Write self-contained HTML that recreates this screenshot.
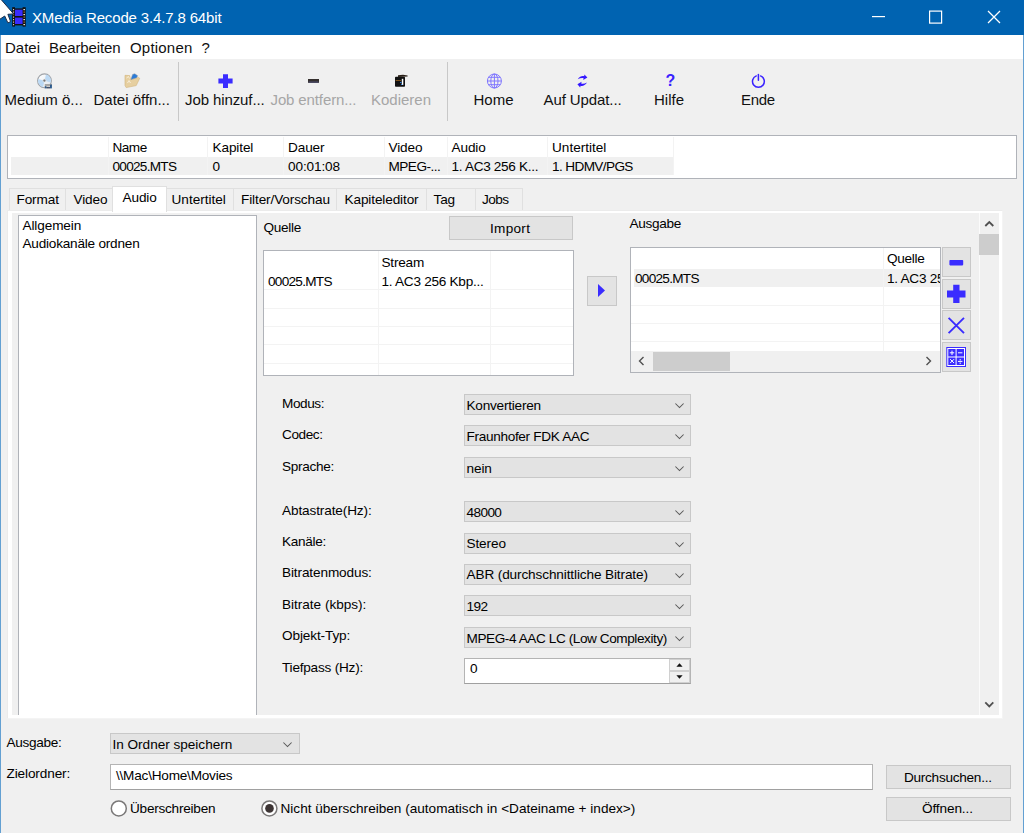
<!DOCTYPE html>
<html lang="de">
<head>
<meta charset="utf-8">
<title>XMedia Recode 3.4.7.8 64bit</title>
<style>
*{box-sizing:border-box;margin:0;padding:0}
html,body{width:1024px;height:833px;overflow:hidden;background:#f0f0f0}
body{position:relative;font-family:"Liberation Sans",sans-serif;color:#000}
.a{position:absolute}
.t{position:absolute;white-space:pre;font-size:13.6px;line-height:15px;color:#000;letter-spacing:-0.12px}
.s{position:absolute;white-space:pre;font-size:15px;line-height:17px;color:#101010}
.dis{color:#a6a6a6}
.btn{position:absolute;background:#e3e3e3;border:1px solid #c8c8c8}
.cb{position:absolute;background:#e3e3e3;border:1px solid #c8c8c8;height:21px}
.cb svg{position:absolute;right:6.3px;top:8px}
.lst{position:absolute;background:#fff;border:1px solid #b0b3b9}
.gl{position:absolute;background:#f3f3f3}
.tab{position:absolute;top:188px;height:23px;background:#f0f0f0;border:1px solid #e0e0e0;border-bottom:none}
</style>
</head>
<body>

<!-- title bar -->
<div class="a" id="titlebar" style="left:0;top:0;width:1024px;height:35px;background:#0063b1"></div>
<div class="s" style="left:32px;top:9.3px;color:#fff;letter-spacing:-0.15px">XMedia Recode 3.4.7.8 64bit</div>
<!-- app icon -->
<svg class="a" style="left:11px;top:6px" width="16" height="22" viewBox="11 6 16 22">
  <rect x="12.2" y="7.2" width="2.8" height="19.4" fill="#111"/>
  <rect x="22.6" y="7.2" width="3.1" height="19.4" fill="#111"/>
  <rect x="14" y="8.4" width="9.5" height="17" fill="#111"/>
  <rect x="15" y="9.7" width="7.6" height="6.3" fill="#3a2cff"/>
  <rect x="15" y="17.6" width="7.6" height="6.4" fill="#3a2cff"/>
  <g fill="#e8e0d8">
    <rect x="13.1" y="9" width="1" height="1.2"/><rect x="13.1" y="11.5" width="1" height="1.2"/>
    <rect x="13.1" y="16.5" width="1" height="1.2"/><rect x="13.1" y="19" width="1" height="1.2"/>
    <rect x="13.1" y="21.5" width="1" height="1.2"/><rect x="13.1" y="24" width="1" height="1.2"/>
    <rect x="23.4" y="9" width="1.6" height="1.2"/><rect x="23.4" y="14" width="1.6" height="1.2"/>
    <rect x="23.4" y="19" width="1.6" height="1.2"/><rect x="23.4" y="24" width="1.6" height="1.2"/>
  </g>
  <g fill="#9a6a30">
    <rect x="13.1" y="14" width="1" height="1.2"/>
    <rect x="23.4" y="11.5" width="1.6" height="1.2"/><rect x="23.4" y="16.5" width="1.6" height="1.2"/><rect x="23.4" y="21.5" width="1.6" height="1.2"/>
  </g>
</svg>
<!-- mouse cursor -->
<svg class="a" style="left:0;top:0" width="16" height="25" viewBox="0 0 16 25">
  <polygon points="-2,-3.6 1.2,-0.4 13.6,13.9 7.9,14.3 10.6,21.6 7.9,22.9 4.7,16 -1,19.8" fill="#fff" stroke="#1c2c48" stroke-width="1"/>
</svg>
<!-- window buttons -->
<svg class="a" style="left:860px;top:0" width="164" height="35" viewBox="860 0 164 35">
  <rect x="872" y="16" width="13" height="1.2" fill="#fff"/>
  <rect x="929.6" y="11.1" width="12" height="12" fill="none" stroke="#fff" stroke-width="1.2"/>
  <path d="M988 11 L1000 23 M1000 11 L988 23" stroke="#fff" stroke-width="1.25" fill="none"/>
</svg>

<!-- menu bar -->
<div class="a" style="left:1px;top:35px;width:1022px;height:23.5px;background:#fff"></div>
<div class="s" style="left:5px;top:39.2px">Datei</div>
<div class="s" style="left:49px;top:39.2px;letter-spacing:-0.1px">Bearbeiten</div>
<div class="s" style="left:130px;top:39.2px;letter-spacing:0.2px">Optionen</div>
<div class="s" style="left:201.5px;top:39.2px">?</div>

<!-- window borders -->
<div class="a" style="left:0;top:35px;width:1px;height:798px;background:#63a0d2"></div>
<div class="a" style="left:1023px;top:35px;width:1px;height:798px;background:#63a0d2"></div>

<!-- toolbar -->
<div class="a" style="left:178px;top:62px;width:1px;height:59px;background:#c8c8c8"></div>
<div class="a" style="left:447px;top:62px;width:1px;height:59px;background:#c8c8c8"></div>

<div class="s" style="left:4.5px;top:91.1px">Medium ö...</div>
<div class="s" style="left:93.5px;top:91.1px">Datei öffn...</div>
<div class="s" style="left:185px;top:91.1px;letter-spacing:-0.1px">Job hinzuf...</div>
<div class="s dis" style="left:270.5px;top:91.1px;letter-spacing:-0.12px">Job entfern...</div>
<div class="s dis" style="left:371px;top:91.1px">Kodieren</div>
<div class="s" style="left:473.5px;top:91.1px">Home</div>
<div class="s" style="left:543.5px;top:91.1px;letter-spacing:-0.1px">Auf Updat...</div>
<div class="s" style="left:654px;top:91.1px">Hilfe</div>
<div class="s" style="left:741px;top:91.1px;letter-spacing:-0.35px">Ende</div>

<!-- toolbar icons -->
<svg class="a" style="left:0;top:70px" width="800" height="22" viewBox="0 70 800 22">
  <defs>
    <linearGradient id="cd" x1="0" y1="0" x2="1" y2="1"><stop offset="0" stop-color="#ffffff"/><stop offset="1" stop-color="#dfe6ee"/></linearGradient>
  </defs>
  <!-- disc -->
  <circle cx="44.5" cy="80.8" r="6.9" fill="url(#cd)" stroke="#9fa3a8" stroke-width="1.1"/>
  <path d="M44.5 80.8 L46 74.5 A6.5 6.5 0 0 1 50.8 82.5 Z" fill="#bcd9f4"/>
  <path d="M44.5 80.8 L43 87 A6.5 6.5 0 0 1 38.2 79 Z" fill="#bcd9f4"/>
  <circle cx="44.4" cy="80.6" r="1.5" fill="#777" stroke="#e8e8e8" stroke-width="0.8"/>
  <rect x="44.8" y="84" width="7.2" height="2.4" fill="#a6a6a6"/>
  <rect x="46.4" y="86.2" width="3.8" height="1" fill="#d4d4d4"/>
  <rect x="44.8" y="86.2" width="1.6" height="2.2" fill="#2c5a8c"/>
  <rect x="50" y="84.6" width="1.9" height="3.8" fill="#2c5a8c"/>
  <rect x="46.4" y="87.1" width="3.6" height="1.3" fill="#34425e"/>
  <!-- folder -->
  <polygon points="125,75.3 129.7,75.6 130.6,79.7 138.5,77.4 139.7,78.3 136.2,85.6 126.2,87.6 125,85.6" fill="#e6cfa0" stroke="#d2b37a" stroke-width="0.6"/>
  <polygon points="131,79.3 132.6,74.4 134.8,73.8 137.6,75.7 136.6,77.7 131,79.6" fill="#2a7bd8" stroke="#8d949e" stroke-width="0.5"/>
  <path d="M126.5 78 l2 -1.5 l1 2 M127.5 83 l1.5 -2.5 l1.5 2.5" stroke="#f8efdc" stroke-width="0.9" fill="none"/>
  <!-- plus -->
  <path d="M223 74.2 h5 v4.2 h4.6 v5 h-4.6 v4.6 h-5 v-4.6 h-4.6 v-5 h4.6 z" fill="#3a2cff"/>
  <!-- minus (disabled look) -->
  <rect x="308" y="79" width="11" height="3.8" fill="#35302e"/>
  <rect x="308.6" y="81.4" width="9.8" height="1.4" fill="#4a4a66"/>
  <!-- kodieren -->
  <rect x="395" y="76.8" width="10" height="10" rx="0.8" fill="#111"/>
  <polygon points="398,75.2 403,74.8 407.6,75.4 407.6,76.4 398,77" fill="#2a2018"/>
  <rect x="401.8" y="78.8" width="1.5" height="6.2" fill="#fff"/>
  <rect x="395.6" y="80" width="5.4" height="0.9" fill="#8a5a20"/>
  <rect x="400" y="82" width="1.4" height="1" fill="#2a7bd8"/><rect x="401" y="84" width="1.2" height="1" fill="#2a7bd8"/>
  <!-- globe -->
  <g fill="none" stroke="#8077ff" stroke-width="1">
    <circle cx="494.4" cy="81" r="7"/>
    <ellipse cx="494.4" cy="81" rx="3.6" ry="7"/>
    <path d="M494.4 74 V88 M487.4 81 H501.4 M488.6 77.3 H500.2 M488.6 84.7 H500.2"/>
  </g>
  <!-- refresh -->
  <g fill="#3418ff" stroke="none">
    <path d="M577.8 79.2 C579.5 76.2 582.5 75.6 584.2 76.2 L584.4 74.4 L587.4 77.6 L583.2 79.9 L583.6 78.2 C581.8 77.8 579.8 78.2 577.8 79.2 Z"/>
    <path d="M587 82.6 C585.3 85.6 582.3 86.4 580.6 85.8 L580.2 87.6 L577.4 84.2 L581.6 81.8 L581.2 83.6 C583 84.2 585 83.6 587 82.6 Z"/>
  </g>
  <!-- power -->
  <g fill="none" stroke="#3a22ff" stroke-width="1.5" stroke-linecap="round">
    <path d="M756.3 75.9 A5.9 5.9 0 1 0 760.5 75.9"/>
    <path d="M758.4 74.4 V80.2"/>
  </g>
</svg>
<div class="a" style="left:663.5px;top:71.4px;width:14px;font-size:16px;line-height:19px;font-weight:bold;color:#3a22ff;text-align:center">?</div>

<!-- file list -->
<div class="lst" style="left:7px;top:135px;width:1010px;height:44px"></div>
<div class="a" style="left:10.6px;top:157px;width:663.4px;height:17.5px;background:#f0f0f0"></div>
<div class="gl" style="left:108px;top:137px;width:1px;height:38px"></div>
<div class="gl" style="left:207px;top:137px;width:1px;height:38px"></div>
<div class="gl" style="left:283px;top:137px;width:1px;height:38px"></div>
<div class="gl" style="left:384px;top:137px;width:1px;height:38px"></div>
<div class="gl" style="left:447px;top:137px;width:1px;height:38px"></div>
<div class="gl" style="left:547px;top:137px;width:1px;height:38px"></div>
<div class="gl" style="left:673px;top:137px;width:1px;height:38px"></div>
<div class="t" style="left:112.5px;top:140px;letter-spacing:-0.52px">Name</div>
<div class="t" style="left:212.5px;top:140px">Kapitel</div>
<div class="t" style="left:288px;top:140px">Dauer</div>
<div class="t" style="left:388.5px;top:140px">Video</div>
<div class="t" style="left:451.5px;top:140px">Audio</div>
<div class="t" style="left:552px;top:140px;letter-spacing:0.00px">Untertitel</div>
<div class="t" style="left:112.5px;top:159px;letter-spacing:-0.72px">00025.MTS</div>
<div class="t" style="left:212.5px;top:159px">0</div>
<div class="t" style="left:288px;top:159px">00:01:08</div>
<div class="t" style="left:388.5px;top:159px;letter-spacing:-0.52px">MPEG-...</div>
<div class="t" style="left:451.5px;top:159px;letter-spacing:-0.32px">1. AC3 256 K...</div>
<div class="t" style="left:552px;top:159px;letter-spacing:-0.62px">1. HDMV/PGS</div>

<!-- tabs -->
<div class="tab" style="left:9px;width:57px"></div>
<div class="tab" style="left:65px;width:48px"></div>
<div class="tab" style="left:165px;width:69px"></div>
<div class="tab" style="left:233px;width:104px"></div>
<div class="tab" style="left:336px;width:91px"></div>
<div class="tab" style="left:426px;width:50px"></div>
<div class="tab" style="left:475px;width:48px"></div>
<!-- tab pane -->
<div class="a" style="left:7px;top:210px;width:996px;height:509.3px;background:#fff;border:1px solid #ebebeb;border-right-color:#f4f4f4;border-bottom-color:#f4f4f4"></div>
<div class="a" style="left:12px;top:212.6px;width:987.4px;height:502.6px;background:#f0f0f0"></div>
<!-- selected tab -->
<div class="a" style="left:112px;top:185.5px;width:54.5px;height:26px;background:#fff;border:1px solid #e0e0e0;border-bottom:none"></div>
<div class="t" style="left:16.5px;top:192px">Format</div>
<div class="t" style="left:73.5px;top:192px">Video</div>
<div class="t" style="left:122.5px;top:190px">Audio</div>
<div class="t" style="left:171.5px;top:192px;letter-spacing:0.00px">Untertitel</div>
<div class="t" style="left:241px;top:192px">Filter/Vorschau</div>
<div class="t" style="left:344.5px;top:192px">Kapiteleditor</div>
<div class="t" style="left:433.5px;top:192px">Tag</div>
<div class="t" style="left:482px;top:192px;letter-spacing:-0.52px">Jobs</div>

<!-- left listbox -->
<div class="lst" style="left:18px;top:215px;width:239px;height:500px;border-bottom:none"></div>
<div class="t" style="left:22.5px;top:218px">Allgemein</div>
<div class="t" style="left:22.5px;top:236px;letter-spacing:-0.22px">Audiokanäle ordnen</div>

<!-- Quelle -->
<div class="t" style="left:263.5px;top:220px;letter-spacing:-0.32px">Quelle</div>
<div class="btn" style="left:448.6px;top:216.3px;width:124.4px;height:23.5px"></div>
<div class="t" style="left:490px;top:221px;letter-spacing:0.28px">Import</div>
<div class="lst" style="left:263px;top:250px;width:311px;height:126px"></div>
<div class="gl" style="left:377.5px;top:251px;width:1px;height:124px"></div>
<div class="gl" style="left:490px;top:251px;width:1px;height:124px"></div>
<div class="gl" style="left:264px;top:289.3px;width:309px;height:1px"></div>
<div class="gl" style="left:264px;top:307.7px;width:309px;height:1px"></div>
<div class="gl" style="left:264px;top:326px;width:309px;height:1px"></div>
<div class="gl" style="left:264px;top:344.4px;width:309px;height:1px"></div>
<div class="gl" style="left:264px;top:362.8px;width:309px;height:1px"></div>
<div class="t" style="left:381.5px;top:255px;letter-spacing:-0.22px">Stream</div>
<div class="t" style="left:268px;top:274px;letter-spacing:-0.72px">00025.MTS</div>
<div class="t" style="left:381.5px;top:274px;letter-spacing:-0.27px">1. AC3 256 Kbp...</div>

<!-- arrow button -->
<div class="btn" style="left:586.5px;top:276px;width:30.5px;height:30px"></div>
<svg class="a" style="left:596px;top:282px" width="12" height="18" viewBox="596 282 12 18"><polygon points="598,284 605,290.5 598,297" fill="#3a2cff"/></svg>

<!-- Ausgabe -->
<div class="t" style="left:629.5px;top:216px;letter-spacing:-0.32px">Ausgabe</div>
<div class="lst" style="left:630px;top:247px;width:311px;height:125.5px"></div>
<div class="a" style="left:633.5px;top:269.2px;width:306.5px;height:17.6px;background:#f0f0f0"></div>
<div class="gl" style="left:882.5px;top:248px;width:1px;height:103px"></div>
<div class="gl" style="left:631px;top:304.8px;width:309px;height:1px"></div>
<div class="gl" style="left:631px;top:323.1px;width:309px;height:1px"></div>
<div class="gl" style="left:631px;top:341.4px;width:309px;height:1px"></div>
<div class="a" style="left:887px;top:248px;width:53px;height:40px;overflow:hidden">
  <div class="t" style="left:0;top:3px;letter-spacing:-0.32px">Quelle</div>
  <div class="t" style="left:0;top:23px;letter-spacing:-0.27px">1. AC3 256 Kbp...</div>
</div>
<div class="t" style="left:635px;top:271px;letter-spacing:-0.72px">00025.MTS</div>
<!-- h scrollbar -->
<div class="a" style="left:631px;top:351px;width:309px;height:20.5px;background:#f0f0f0"></div>
<div class="a" style="left:652.5px;top:352px;width:77px;height:19px;background:#cdcdcd"></div>
<svg class="a" style="left:636px;top:355px" width="12" height="12" viewBox="0 0 12 12"><path d="M7.5 2 L3.5 6 L7.5 10" fill="none" stroke="#505050" stroke-width="1.4"/></svg>
<svg class="a" style="left:922px;top:355px" width="12" height="12" viewBox="0 0 12 12"><path d="M4.5 2 L8.5 6 L4.5 10" fill="none" stroke="#505050" stroke-width="1.4"/></svg>

<!-- side buttons -->
<div class="btn" style="left:941.8px;top:247.4px;width:29.1px;height:29.7px"></div>
<div class="btn" style="left:941.8px;top:279.2px;width:29.1px;height:29.4px"></div>
<div class="btn" style="left:941.8px;top:310.3px;width:29.1px;height:29.8px"></div>
<div class="btn" style="left:941.8px;top:342.1px;width:29.1px;height:29.5px"></div>
<svg class="a" style="left:942px;top:247px" width="29" height="125" viewBox="942 247 29 125">
  <rect x="949.4" y="260" width="13.8" height="5.4" rx="0.8" fill="#3a2cff"/>
  <path d="M953.2 284.7 h6.3 v5.9 h6 v6.9 h-6 v5.5 h-6.3 v-5.5 h-6.2 v-6.9 h6.2 z" fill="#3a2cff"/>
  <path d="M948.6 317.8 L964 333.2 M964 317.8 L948.6 333.2" stroke="#3a2cff" stroke-width="1.9" fill="none"/>
  <rect x="946.3" y="347" width="19.7" height="20" fill="#3a2cff"/>
  <g stroke="#fff" stroke-width="1" fill="none">
    <rect x="947.8" y="348.5" width="16.7" height="17"/>
    <path d="M956.1 348.5 V365.5 M947.8 357 H964.5"/>
    <path d="M949.8 352.8 h4.4 M952 350.6 v4.4 M958 352.8 h4.4"/>
    <path d="M950.2 359.2 l3.8 3.8 M954 359.2 l-3.8 3.8 M958 361.4 h4.4"/>
  </g>
  <rect x="959.6" y="359.2" width="1.2" height="1.2" fill="#fff"/><rect x="959.6" y="362.6" width="1.2" height="1.2" fill="#fff"/>
</svg>

<!-- v scrollbar -->
<div class="a" style="left:978.5px;top:212.5px;width:1px;height:502.5px;background:#fbfbfb"></div>
<div class="a" style="left:978.8px;top:234.4px;width:20.3px;height:20.6px;background:#cdcdcd"></div>
<svg class="a" style="left:983px;top:218px" width="12" height="12" viewBox="0 0 12 12"><path d="M2.3 8 L6.3 4 L10.3 8" fill="none" stroke="#505050" stroke-width="1.8"/></svg>
<svg class="a" style="left:983px;top:698px" width="12" height="12" viewBox="0 0 12 12"><path d="M2.3 4.4 L6.3 8.4 L10.3 4.4" fill="none" stroke="#505050" stroke-width="1.8"/></svg>

<!-- form -->
<div class="t" style="left:282px;top:396px;letter-spacing:-0.42px">Modus:</div>
<div class="t" style="left:282px;top:427px;letter-spacing:-0.42px">Codec:</div>
<div class="t" style="left:282px;top:459px;letter-spacing:-0.32px">Sprache:</div>
<div class="t" style="left:282px;top:503px">Abtastrate(Hz):</div>
<div class="t" style="left:282px;top:534px;letter-spacing:-0.32px">Kanäle:</div>
<div class="t" style="left:282px;top:565px">Bitratenmodus:</div>
<div class="t" style="left:282px;top:597px;letter-spacing:-0.02px">Bitrate (kbps):</div>
<div class="t" style="left:282px;top:628px">Objekt-Typ:</div>
<div class="t" style="left:282px;top:660px;letter-spacing:-0.22px">Tiefpass (Hz):</div>

<div class="cb" style="left:464px;top:394px;width:227px"><svg width="9" height="6" viewBox="0 0 9 6"><path d="M0.4 0.5 L4.5 4.6 L8.6 0.5" fill="none" stroke="#585858" stroke-width="1.05"/></svg></div>
<div class="cb" style="left:464px;top:425.4px;width:227px"><svg width="9" height="6" viewBox="0 0 9 6"><path d="M0.4 0.5 L4.5 4.6 L8.6 0.5" fill="none" stroke="#585858" stroke-width="1.05"/></svg></div>
<div class="cb" style="left:464px;top:456.8px;width:227px"><svg width="9" height="6" viewBox="0 0 9 6"><path d="M0.4 0.5 L4.5 4.6 L8.6 0.5" fill="none" stroke="#585858" stroke-width="1.05"/></svg></div>
<div class="cb" style="left:464px;top:501.3px;width:227px"><svg width="9" height="6" viewBox="0 0 9 6"><path d="M0.4 0.5 L4.5 4.6 L8.6 0.5" fill="none" stroke="#585858" stroke-width="1.05"/></svg></div>
<div class="cb" style="left:464px;top:532.7px;width:227px"><svg width="9" height="6" viewBox="0 0 9 6"><path d="M0.4 0.5 L4.5 4.6 L8.6 0.5" fill="none" stroke="#585858" stroke-width="1.05"/></svg></div>
<div class="cb" style="left:464px;top:564.1px;width:227px"><svg width="9" height="6" viewBox="0 0 9 6"><path d="M0.4 0.5 L4.5 4.6 L8.6 0.5" fill="none" stroke="#585858" stroke-width="1.05"/></svg></div>
<div class="cb" style="left:464px;top:595.4px;width:227px"><svg width="9" height="6" viewBox="0 0 9 6"><path d="M0.4 0.5 L4.5 4.6 L8.6 0.5" fill="none" stroke="#585858" stroke-width="1.05"/></svg></div>
<div class="cb" style="left:464px;top:626.8px;width:227px"><svg width="9" height="6" viewBox="0 0 9 6"><path d="M0.4 0.5 L4.5 4.6 L8.6 0.5" fill="none" stroke="#585858" stroke-width="1.05"/></svg></div>

<div class="t" style="left:466.5px;top:398px;letter-spacing:-0.22px">Konvertieren</div>
<div class="t" style="left:466.5px;top:429px;letter-spacing:-0.32px">Fraunhofer FDK AAC</div>
<div class="t" style="left:466.5px;top:461px">nein</div>
<div class="t" style="left:466.5px;top:505px;letter-spacing:-0.6px">48000</div>
<div class="t" style="left:466.5px;top:536px">Stereo</div>
<div class="t" style="left:466.5px;top:567px">ABR (durchschnittliche Bitrate)</div>
<div class="t" style="left:466.5px;top:599px;letter-spacing:-0.5px">192</div>
<div class="t" style="left:466.5px;top:631px;letter-spacing:-0.42px">MPEG-4 AAC LC (Low Complexity)</div>

<!-- spin -->
<div class="a" style="left:464px;top:658.2px;width:227px;height:25.5px;background:#fff;border:1px solid #b4b4b4;border-bottom-color:#a0a0a0"></div>
<div class="a" style="left:669px;top:659px;width:21px;height:24px;background:#f0f0f0"></div>
<div class="a" style="left:669px;top:659px;width:21px;height:12px;background:#f0f0f0;border:1px solid #d0d0d0"></div>
<div class="a" style="left:669px;top:671px;width:21px;height:12px;background:#f0f0f0;border:1px solid #d0d0d0"></div>
<svg class="a" style="left:669px;top:659px" width="21" height="24" viewBox="0 0 21 24"><polygon points="10.5,4.2 13.6,7.8 7.4,7.8" fill="#111"/><polygon points="10.5,19.8 13.6,16.2 7.4,16.2" fill="#111"/></svg>
<div class="t" style="left:470px;top:661px">0</div>

<!-- bottom -->
<div class="t" style="left:6.5px;top:735px;letter-spacing:-0.32px">Ausgabe:</div>
<div class="cb" style="left:110px;top:733.1px;width:189.5px;height:20.8px"><svg width="9" height="6" viewBox="0 0 9 6"><path d="M0.4 0.5 L4.5 4.6 L8.6 0.5" fill="none" stroke="#585858" stroke-width="1.05"/></svg></div>
<div class="t" style="left:112.5px;top:737px;letter-spacing:-0.02px">In Ordner speichern</div>
<div class="t" style="left:6.5px;top:766px">Zielordner:</div>
<div class="a" style="left:110px;top:764px;width:763px;height:26px;background:#fff;border:1px solid #b4b4b4;border-bottom-color:#a0a0a0"></div>
<div class="t" style="left:116px;top:768px;letter-spacing:-0.22px">\\Mac\Home\Movies</div>
<svg class="a" style="left:108px;top:798px" width="174" height="22" viewBox="108 798 174 22">
  <circle cx="118.8" cy="808.4" r="7.5" fill="#fff" stroke="#7a7878" stroke-width="1.5"/>
  <circle cx="269.4" cy="808.4" r="7.5" fill="#fff" stroke="#7a7878" stroke-width="1.5"/>
  <circle cx="269.5" cy="808.4" r="4.3" fill="#3d3535"/>
</svg>
<div class="t" style="left:130px;top:801px;letter-spacing:-0.24px">Überschreiben</div>
<div class="t" style="left:280.5px;top:801px;letter-spacing:0.00px">Nicht überschreiben (automatisch in &lt;Dateiname + index&gt;)</div>
<div class="btn" style="left:886px;top:765px;width:124.5px;height:23.5px"></div>
<div class="t" style="left:904px;top:770px;letter-spacing:-0.27px">Durchsuchen...</div>
<div class="btn" style="left:886px;top:796.5px;width:124.5px;height:24px"></div>
<div class="t" style="left:922px;top:801px">Öffnen...</div>

</body>
</html>
